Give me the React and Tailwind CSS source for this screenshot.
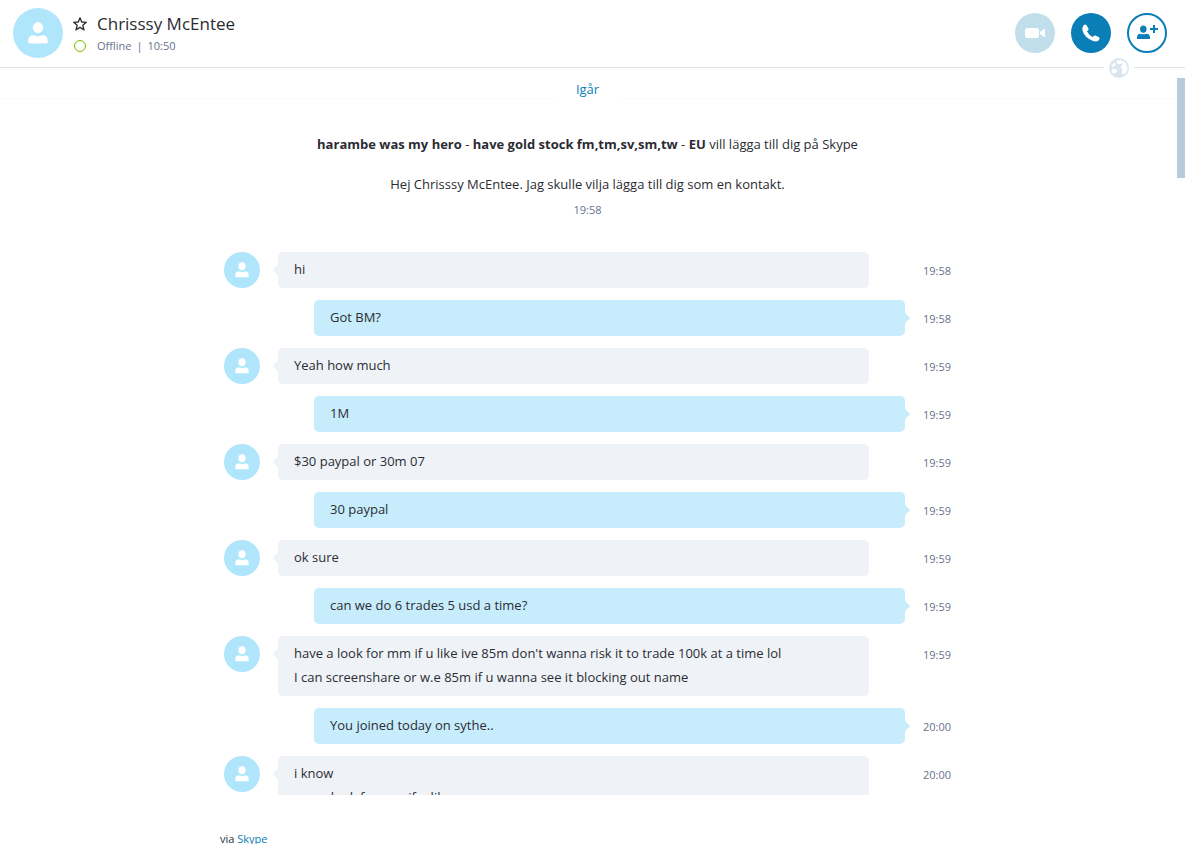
function Avatar({ large }) {
  return (
    <div className={`flex shrink-0 items-center justify-center rounded-full bg-[#b0e6fb] text-white ${large ? "size-[50px]" : "size-9"}`}>
      <svg viewBox="0 0 20 22" className={large ? "h-[22px] w-5" : "h-4 w-[14px]"} fill="currentColor" aria-hidden="true">
        <ellipse cx="10" cy="5.6" rx="5.100" ry="5.6" />
        <path d="M.2 19.500C.2 15.300 2 13.300 5 13.300c1.600 0 2.600 1 5 1s3.400-1 5-1c3 0 4.800 2 4.800 6.200 0 1.300-.6 2-1.800 2H2c-1.200 0-1.800-.7-1.800-2z" />
      </svg>
    </div>
  );
}

const messages = [
  { lines: ["hi"], time: "19:58" },
  { mine: true, lines: ["Got BM?"], time: "19:58" },
  { lines: ["Yeah how much"], time: "19:59" },
  { mine: true, lines: ["1M"], time: "19:59" },
  { lines: ["$30 paypal or 30m 07"], time: "19:59" },
  { mine: true, lines: ["30 paypal"], time: "19:59" },
  { lines: ["ok sure"], time: "19:59" },
  { mine: true, lines: ["can we do 6 trades 5 usd a time?"], time: "19:59" },
  {
    lines: [
      "have a look for mm if u like ive 85m don't wanna risk it to trade 100k at a time lol",
      "I can screenshare or w.e 85m if u wanna see it blocking out name",
    ],
    time: "19:59",
  },
  { mine: true, lines: ["You joined today on sythe.."], time: "20:00" },
  { lines: ["i know", "come look for mm if u like"], time: "20:00" },
];

function Message({ mine, lines, time }) {
  return (
    <li className="flex items-start">
      {mine ? <div className="w-9 shrink-0" /> : <Avatar />}
      <div className={`flex min-w-0 flex-1 ${mine ? "pl-[54px]" : "pr-9 pl-[18px]"}`}>
        <div className={`relative w-full rounded-[5px] px-4 pt-[5px] pb-[7px] leading-6 ${mine ? "bg-[#c7ecfc]" : "bg-[#eff3f8]"}`}>
          {mine ? (
            <svg viewBox="0 0 5 14" className="absolute top-[11px] left-full h-[14px] w-[5px]" fill="#c7ecfc" aria-hidden="true"><path d="M0 0q0 2 1.500 3.500L4.500 6q1 1 0 2L1.500 10.500Q0 12 0 14z" /></svg>
          ) : (
            <svg viewBox="0 0 5 14" className="absolute top-[11px] right-full h-[14px] w-[5px]" fill="#eff3f8" aria-hidden="true"><path d="M5 0q0 2-1.500 3.500L.500 6q-1 1 0 2L3.500 10.500Q5 12 5 14z" /></svg>
          )}
          {lines.map((line) => <p key={line}>{line}</p>)}
        </div>
      </div>
      <time className="ml-[18px] w-8 shrink-0 pt-[7px] text-[11px] leading-6 text-[#66728a]">{time}</time>
    </li>
  );
}

export default function App() {
  return (
    <div className="flex h-screen flex-col overflow-hidden bg-white font-['Open_Sans','Noto_Sans',sans-serif] text-[13px] text-[#2b2c33]">
      <header className="relative flex h-[68px] shrink-0 items-center border-b border-[#dbe5ee] pr-[18px] pb-[2px] pl-[13px]">
        <Avatar large />
        <div className="ml-[10px] flex flex-col pt-[2px]">
          <div className="flex items-center gap-[10px]">
            <button type="button" aria-label="Favourite" className="size-[14px]">
              <svg viewBox="0 0 14 14" className="size-[14px]" fill="none" stroke="#2b2c33" strokeWidth="1.3" strokeLinejoin="round"><path d="M7 .800l1.700 4.200 4.600.300-3.500 2.900 1.200 4.700L7 10.400l-4 2.500 1.200-4.700L.700 5.300l4.600-.300z" /></svg>
            </button>
            <h1 className="text-[17px] leading-6">Chrisssy McEntee</h1>
          </div>
          <div className="flex items-center gap-[10px]">
            <span className="mx-px size-3 rounded-full border border-[#7fba00]" />
            <p className="flex gap-[5px] text-[11px] leading-5 text-[#66728a]"><span>Offline</span><span>|</span><span>10:50</span></p>
          </div>
        </div>
        <div className="ml-auto flex gap-4">
          <button type="button" aria-label="Video call" className="flex size-10 items-center justify-center rounded-full bg-[#c1deeb] text-white">
            <svg viewBox="0 0 20 10" className="h-[10px] w-5" fill="currentColor"><rect width="14" height="10" rx="2.500" /><path d="M15 4l4-3q1-.500 1 .500v7q0 1-1 .500l-4-3z" /></svg>
          </button>
          <button type="button" aria-label="Call" className="flex size-10 items-center justify-center rounded-full bg-[#0a7eb7] text-white">
            <svg viewBox="0 0 18 18" className="size-[18px]" fill="currentColor"><path d="M1.300 1.800Q3-.200 4.400 1l2 3.500q.500 1-.500 1.900l-.900.900Q6.600 11 10.700 13l.900-.900q.900-1 1.900-.500l3.500 1.700q1.300 1.400-.500 3.200Q14.500 18 11 17 2.400 13.500.500 6.500 0 3.600 1.300 1.800z" /></svg>
          </button>
          <button type="button" aria-label="Add people" className="flex size-10 items-center justify-center rounded-full border-2 border-[#0a7eb7] text-[#0a7eb7]">
            <svg viewBox="0 0 22 16" className="h-4 w-[22px]" fill="currentColor"><ellipse cx="7.300" cy="4.200" rx="3.200" ry="3.600" /><path d="M1 14v-1.500Q1 9 4.300 8.800q3 1 6 0Q14 9 14 12.500V14zM17 0h2v3h3v2h-3v3h-2V5h-3V3h3z" /></svg>
          </button>
        </div>
        <div className="absolute right-[51px] -bottom-[11px] bg-white px-[5px]">
          <svg viewBox="0 0 20 20" className="size-5" fill="#dbe5ee" aria-hidden="true"><circle cx="10" cy="10" r="10" /><path fill="#fff" d="M7.500 3.200Q9 1.800 11.500 2L16 4.200 18.300 8v4l-1.800 3.300-2.800 1.500-1-2.300.8-3-1.800-2 .7-2.300L14.500 6 13 5.300l-2 1-3-.8zM2.300 12.500l1.500-1.800L7 11l1.300 1.500-.8 2-2.300 1.200-2-1zM3 7l2-2.500 2 2L5 8.500 2.600 9z" /></svg>
        </div>
      </header>

      <div className="flex min-h-0 flex-1">
        <main className="flex min-w-0 flex-1 flex-col">
          <section className="min-h-0 flex-1 overflow-hidden" aria-label="Conversation">
            <div className="text-center leading-6">
              <div className="flex pt-[9px]">
                <div className="mt-[21px] h-px flex-1 bg-[#fafafa]" />
                <p className="px-5 text-[#0a7eb7]">Igår</p>
                <div className="mt-[21px] h-px flex-1 bg-[#fafafa]" />
              </div>
              <p className="mt-[31px]"><b>harambe was my hero</b> - <b>have gold stock fm,tm,sv,sm,tw</b> - <b>EU</b> vill lägga till dig på Skype</p>
              <p className="mt-4">Hej Chrisssy McEntee. Jag skulle vilja lägga till dig som en kontakt.</p>
              <time className="mt-[2px] block text-[11px] text-[#66728a]">19:58</time>
            </div>
            <ul className="mx-auto mt-[30px] flex max-w-[735px] flex-col gap-3 pl-1">
              {messages.map((m, i) => <Message key={i} {...m} />)}
            </ul>
          </section>
          <footer className="mx-auto h-[49px] w-full max-w-[735px] shrink-0 pt-[35px] text-[11px] leading-[18px]">via <a href="#skype" className="text-[#0a7eb7]">Skype</a></footer>
        </main>
        <div className="w-[10px] shrink-0 pt-[10px] pl-[2px]"><div className="h-[100px] bg-[#b9cad9]" /></div>
      </div>
    </div>
  );
}
